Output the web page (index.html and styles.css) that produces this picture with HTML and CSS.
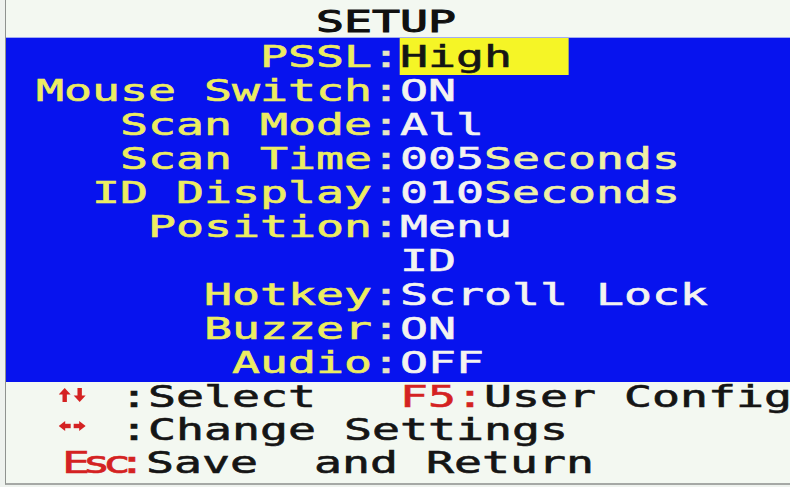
FILE: index.html
```html
<!DOCTYPE html>
<html>
<head>
<meta charset="utf-8">
<link rel="stylesheet" href="styles.css">
</head>
<body>
<div class="screen">
  <div class="frame">
    <div class="osd">
      <div class="title">SETUP</div>
      <div class="menu">
        <div class="row"><span class="lbl">PSSL</span><span class="sep">:</span><span class="val sel">High</span></div>
        <div class="row"><span class="lbl">Mouse Switch</span><span class="sep">:</span><span class="val">ON</span></div>
        <div class="row"><span class="lbl">Scan Mode</span><span class="sep">:</span><span class="val">All</span></div>
        <div class="row"><span class="lbl">Scan Time</span><span class="sep">:</span><span class="val">005<span class="tint">Seconds</span></span></div>
        <div class="row"><span class="lbl">ID Display</span><span class="sep">:</span><span class="val">010<span class="tint">Seconds</span></span></div>
        <div class="row"><span class="lbl">Position</span><span class="sep">:</span><span class="val">Menu</span></div>
        <div class="row"><span class="lbl"></span><span class="sep"></span><span class="val">ID</span></div>
        <div class="row"><span class="lbl">Hotkey</span><span class="sep">:</span><span class="val">Scroll Lock</span></div>
        <div class="row"><span class="lbl">Buzzer</span><span class="sep">:</span><span class="val">ON</span></div>
        <div class="row"><span class="lbl">Audio</span><span class="sep">:</span><span class="val">OFF</span></div>
      </div>
      <div class="help">
        <div class="hline"><span class="keys"><svg class="ud" viewBox="0 0 27 14" preserveAspectRatio="none"><polygon points="0,6.5 6,0 12,6.5" fill="#d42222"/><rect x="3.8" y="5" width="4.4" height="9" fill="#d42222"/><rect x="18.8" y="0" width="4.4" height="9" fill="#d42222"/><polygon points="15,7.5 27,7.5 21,14" fill="#d42222"/></svg></span>:Select   <span class="red">F5:</span>User Config</div>
        <div class="hline"><span class="keys"><svg class="lr" viewBox="0 0 27 10" preserveAspectRatio="none"><polygon points="0,5 6.5,0 6.5,10" fill="#d42222"/><rect x="5" y="2.8" width="7" height="4.4" fill="#d42222"/><rect x="15" y="2.8" width="7" height="4.4" fill="#d42222"/><polygon points="20.5,0 27,5 20.5,10" fill="#d42222"/></svg></span>:Change Settings</div>
        <div class="hline"><span class="keys esc red">Esc</span><span class="red">:</span>Save  and Return</div>
      </div>
    </div>
  </div>
</div>
</body>
</html>
```
FILE: styles.css
```css
* {
  box-sizing: border-box;
  margin: 0;
  padding: 0;
}

html, body {
  width: 790px;
  height: 487px;
  overflow: hidden;
  background: #eef2ee;
}

body {
  font-family: "DejaVu Sans Mono", monospace;
}

.screen {
  width: 790px;
  height: 487px;
  padding-left: 5px;
  background: #eef2ee;
  overflow: hidden;
}

.frame {
  height: 485px;
  border-left: 1px solid #8f938f;
  border-bottom: 2px solid #a5a8a5;
  background: #f3f8f1;
  overflow: hidden;
}

.osd {
  width: 506px;
  font-size: 30px;
  transform: scaleX(1.55);
  transform-origin: 0 0;
  -webkit-text-stroke: 0.6px currentColor;
}

.title {
  height: 37px;
  line-height: 43px;
  padding-left: calc(1.3px + 11ch);
  color: #101010;
  white-space: pre;
  -webkit-text-stroke: 1px currentColor;
}

.menu {
  background: #0713ee;
  border-top: 1px solid #a3acf2;
  padding-bottom: 4px;
}

.row {
  display: grid;
  grid-template-columns: 13ch 1ch 1fr;
  height: 34px;
  line-height: 37px;
  padding-left: 1.3px;
  white-space: pre;
}

.lbl {
  text-align: right;
  color: #ecec62;
}

.sep {
  color: #e6e6c4;
}

.val {
  color: #f3f3f0;
}

.tint {
  color: #eef0a6;
}

.sel {
  justify-self: start;
  width: 6ch;
  background: #f5f526;
  color: #151515;
}

.help {
  color: #151515;
}

.hline {
  height: 33px;
  line-height: 29px;
  padding-left: calc(1.3px + 2ch);
  white-space: pre;
}

.keys {
  display: inline-block;
  width: 2ch;
  white-space: nowrap;
}

.ud {
  width: 17.4px;
  height: 14px;
  margin-left: -3px;
  vertical-align: 5px;
}

.lr {
  width: 17.4px;
  height: 10px;
  margin-left: -3px;
  vertical-align: 9px;
}

.red {
  color: #d42222;
}

.esc {
  letter-spacing: -0.27ch;
  margin-left: -1.3px;
}
```
